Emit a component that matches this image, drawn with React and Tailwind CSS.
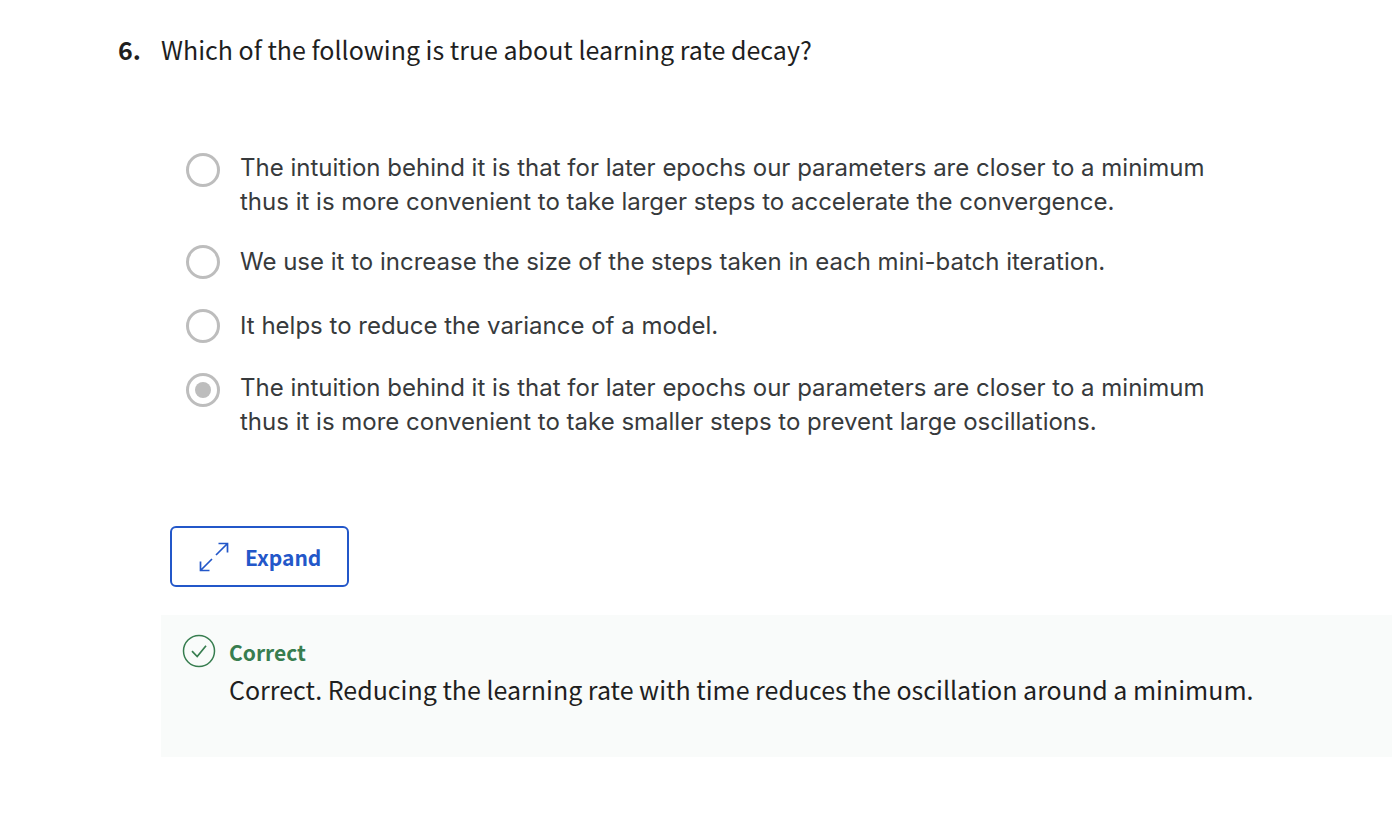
const options = [
  {
    text: "The intuition behind it is that for later epochs our parameters are closer to a minimum thus it is more convenient to take larger steps to accelerate the convergence.",
    multiline: true,
  },
  {
    text: "We use it to increase the size of the steps taken in each mini-batch iteration.",
  },
  { text: "It helps to reduce the variance of a model." },
  {
    text: "The intuition behind it is that for later epochs our parameters are closer to a minimum thus it is more convenient to take smaller steps to prevent large oscillations.",
    multiline: true,
    checked: true,
  },
];

function Option({ id, text, multiline, checked }) {
  return (
    <div className="flex items-start gap-5">
      <input
        type="radio"
        id={id}
        name="answer"
        defaultChecked={checked}
        className="grid size-[34px] shrink-0 appearance-none place-items-center rounded-full border-3 border-[#bdbdbd] bg-white checked:before:size-4 checked:before:rounded-full checked:before:bg-[#bdbdbd] checked:before:content-['']"
      />
      <label
        htmlFor={id}
        className={`max-w-[980px] font-['Inter','Liberation_Sans',sans-serif] text-[24px] leading-[34px] text-[#373a3c] ${
          multiline ? "-mt-0.5 -mb-1" : ""
        }`}
      >
        {text}
      </label>
    </div>
  );
}

export default function App() {
  return (
    <main className="bg-white pt-[30px] pb-16 pl-[118px] font-['Noto_Sans_CJK_SC',sans-serif] text-[#1f1f1f]">
      <div className="flex">
        <span className="w-[43px] shrink-0 text-[25px] leading-[38px] font-bold">6.</span>
        <div className="min-w-0 flex-1">
          <h1 id="question" className="text-[25px] leading-[38px]">
            Which of the following is true about learning rate decay?
          </h1>

          <div
            role="radiogroup"
            aria-labelledby="question"
            className="flex flex-col gap-[30px] pt-[85px] pl-[25px]"
          >
            {options.map((option, i) => (
              <Option key={i} id={`option-${i}`} {...option} />
            ))}
          </div>

          <button
            type="button"
            className="mt-[91px] ml-[9px] flex h-[61px] items-center gap-4 rounded-md border-2 border-[#2357c9] pr-[26px] pl-[27px] text-[#2357c9]"
          >
            <svg viewBox="0 0 30 30" className="size-[30px]" fill="none" stroke="currentColor" strokeWidth="1.7" aria-hidden="true">
              <path d="M17 13 28.5 1.5M19.5 1.5h9v9M13 17 1.5 28.5M1.5 19.5v9h9" />
            </svg>
            <span className="text-[21px] leading-8 font-bold">Expand</span>
          </button>

          <section className="mt-7 flex gap-[13px] bg-[#f9fbfa] pt-[19px] pb-[49px] pl-[21px]">
            <svg viewBox="0 0 34 34" className="size-[34px] shrink-0" fill="none" stroke="#377d4f" aria-hidden="true">
              <circle cx="17" cy="17" r="15.5" strokeWidth="1.5" />
              <path d="m10 17.2 5.2 5.3 8.8-10.7" strokeWidth="1.7" />
            </svg>
            <div>
              <h2 className="text-[21px] leading-[36px] font-bold text-[#377d4f]">Correct</h2>
              <p className="text-[25px] leading-[38px]">
                Correct. Reducing the learning rate with time reduces the oscillation around a minimum.
              </p>
            </div>
          </section>
        </div>
      </div>
    </main>
  );
}
